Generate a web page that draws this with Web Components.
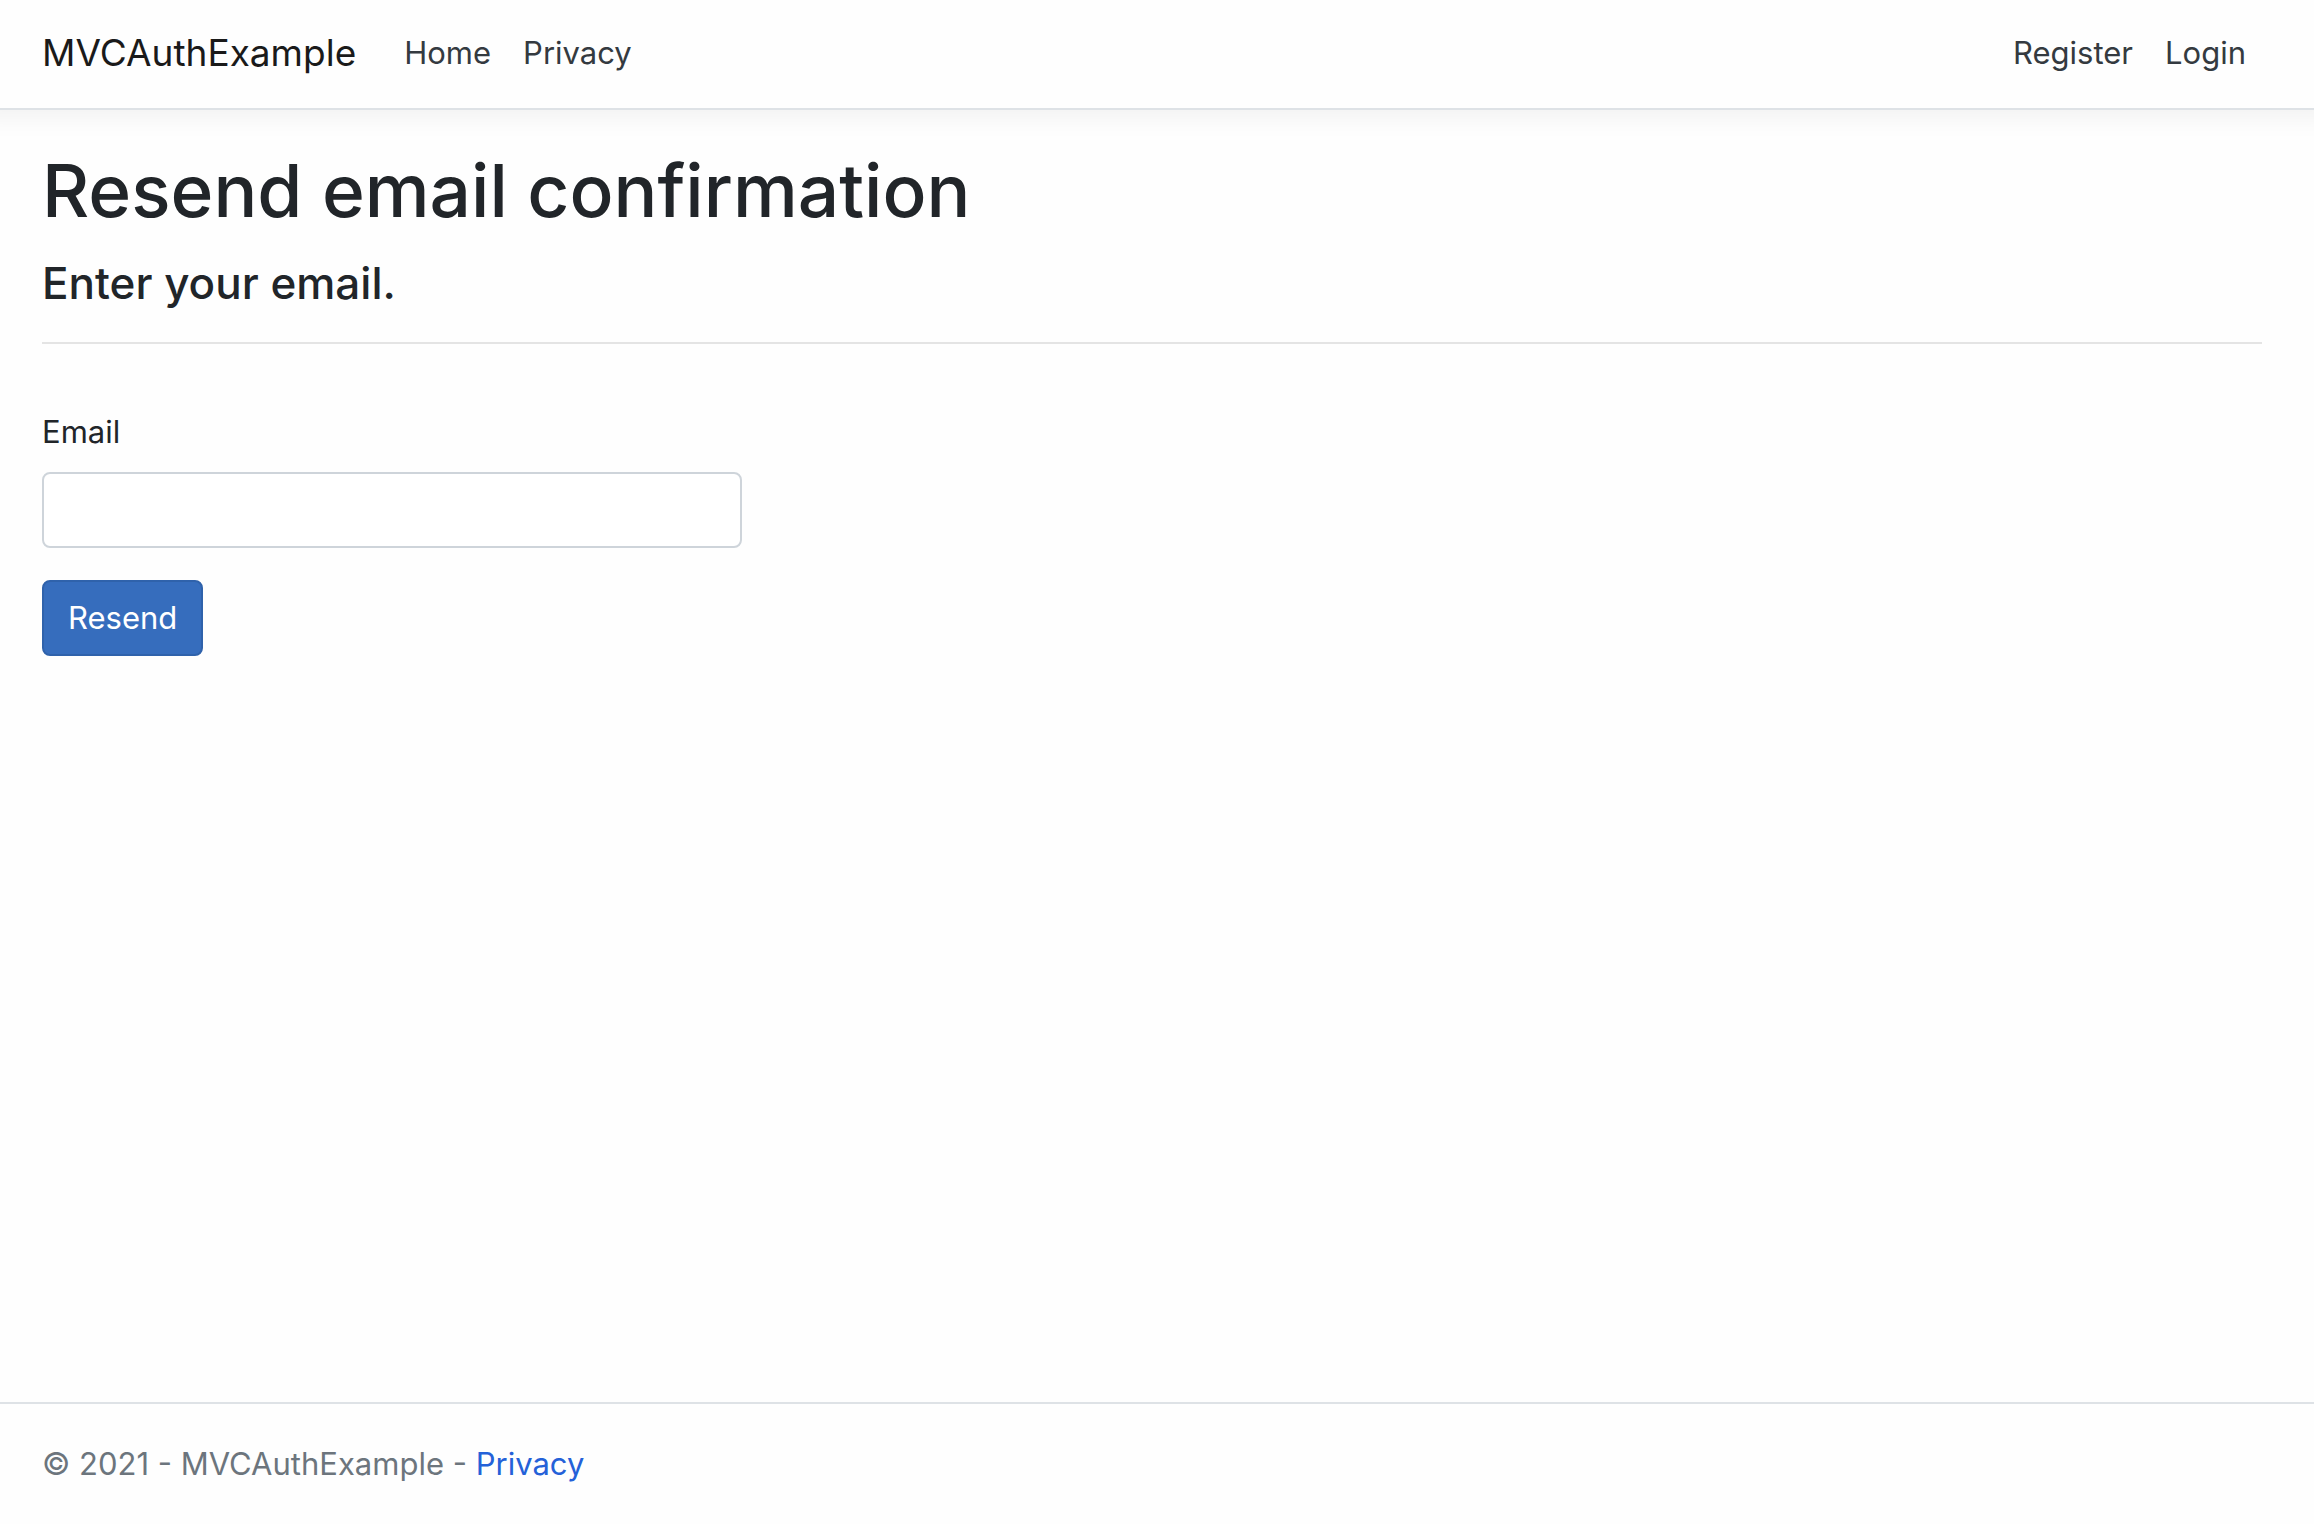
<!DOCTYPE html>
<html lang="en">
<head>
<meta charset="utf-8">
<meta name="viewport" content="width=device-width, initial-scale=1">
<title>Resend email confirmation - MVCAuthExample</title>
<style>
  body {
    margin: 0;
    background: #fefefe;
    color: #212529;
    font-family: Inter, "Liberation Sans", sans-serif;
    font-size: 31px;
    line-height: 48px;
  }
</style>
</head>
<body>
<app-shell>
  <site-header slot="header" brand="MVCAuthExample">
    <nav-item href="#home">Home</nav-item>
    <nav-item href="#privacy">Privacy</nav-item>
    <nav-item slot="account" href="#register">Register</nav-item>
    <nav-item slot="account" href="#login">Login</nav-item>
  </site-header>
  <page-heading>
    Resend email confirmation
    <span slot="lead">Enter your email.</span>
  </page-heading>
  <resend-form></resend-form>
  <site-footer slot="footer">© 2021 - MVCAuthExample - </site-footer>
</app-shell>
<script>
  class BaseElement extends HTMLElement {
    constructor() {
      super();
      this.attachShadow({ mode: "open" }).innerHTML =
        "<style>*{box-sizing:border-box}</style>" + this.constructor.markup;
    }
  }

  customElements.define("app-shell", class extends BaseElement {
    static markup = `
      <style>
        :host { display: flex; flex-direction: column; min-height: 100vh;
                --gutter: 0 52px 0 42px; }
        main { flex: 1; padding: var(--gutter); }
      </style>
      <slot name="header"></slot>
      <main><slot></slot></main>
      <slot name="footer"></slot>`;
  });

  customElements.define("site-header", class extends BaseElement {
    static markup = `
      <style>
        :host { display: block; margin-bottom: 32px; }
        header { border-bottom: 2px solid #dee2e6; background: #fefefe;
                 box-shadow: 0 -16px 24px 24px rgba(0,0,0,.05); padding: var(--gutter); }
        nav { display: flex; align-items: center; padding: 13px 0 15px; }
        .brand { color: #1a1a1a; font-size: 37px; line-height: 60px;
                 text-decoration: none; margin-right: 32px; }
        .links { display: flex; flex: 1; }
        .account { display: flex; }
      </style>
      <header><nav>
        <a class="brand" href="#"></a>
        <div class="links"><slot></slot></div>
        <div class="account"><slot name="account"></slot></div>
      </nav></header>`;
    connectedCallback() {
      this.shadowRoot.querySelector(".brand").textContent = this.getAttribute("brand");
    }
  });

  customElements.define("nav-item", class extends BaseElement {
    static markup = `
      <style>
        :host { display: block; }
        a { display: block; padding: 16px; color: #343a40; text-decoration: none; }
      </style>
      <a><slot></slot></a>`;
    connectedCallback() {
      this.shadowRoot.querySelector("a").href = this.getAttribute("href");
    }
  });

  customElements.define("page-heading", class extends BaseElement {
    static markup = `
      <style>
        :host { display: block; }
        h1, h2 { margin: 0; font-weight: 500; }
        h1 { font-size: 73px; line-height: 98px; margin-bottom: 14px; }
        h2 { font-size: 44px; line-height: 58px; }
        hr { border: 0; border-top: 2px solid #e4e4e4; margin: 30px 0 64px; }
      </style>
      <h1><slot></slot></h1>
      <h2><slot name="lead"></slot></h2>
      <hr>`;
  });

  customElements.define("resend-form", class extends BaseElement {
    static markup = `
      <style>
        :host { display: block; }
        form { display: flex; flex-direction: column; align-items: flex-start; }
        label { margin-bottom: 16px; }
        input, button { font: inherit; line-height: 48px; padding: 12px 24px; border-radius: 8px; }
        input { width: 100%; max-width: 700px; margin-bottom: 32px; color: #495057;
                background: #fff; border: 2px solid #ced4da; }
        button { color: #fff; background: #366dbd; border: 2px solid #2f62ab; }
      </style>
      <form>
        <label for="email">Email</label>
        <input id="email" type="email" name="email">
        <button type="submit">Resend</button>
      </form>`;
  });

  customElements.define("site-footer", class extends BaseElement {
    static markup = `
      <style>
        :host { display: block; }
        footer { border-top: 2px solid #dee2e6; color: #6c757d; line-height: 120px;
                 padding: var(--gutter); }
        a { color: #2461d8; text-decoration: none; }
      </style>
      <footer><slot></slot><a href="#privacy">Privacy</a></footer>`;
  });
</script>
</body>
</html>
